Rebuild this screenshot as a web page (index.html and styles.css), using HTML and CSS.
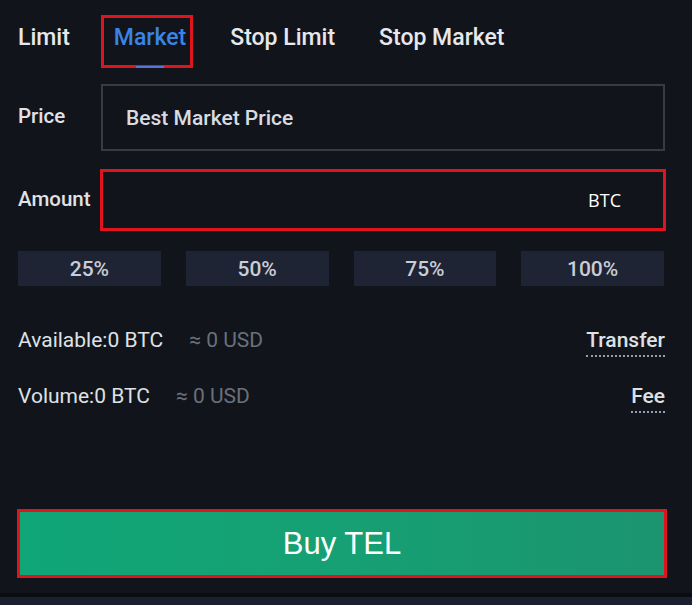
FILE: index.html
```html
<!DOCTYPE html>
<html lang="en">
<head>
<meta charset="utf-8">
<title>Buy TEL</title>
<link rel="stylesheet" href="styles.css">
</head>
<body>
<div class="panel">
  <nav class="tabs">
    <span class="tab">Limit</span>
    <span class="tab tab-active">Market</span>
    <span class="tab">Stop Limit</span>
    <span class="tab">Stop Market</span>
  </nav>

  <div class="field-row">
    <label class="field-label">Price</label>
    <div class="field field-price">Best Market Price</div>
  </div>

  <div class="field-row field-row-amount">
    <label class="field-label">Amount</label>
    <div class="field field-amount"><span class="unit">BTC</span></div>
  </div>

  <div class="pcts">
    <button class="pct">25%</button>
    <button class="pct">50%</button>
    <button class="pct">75%</button>
    <button class="pct">100%</button>
  </div>

  <div class="info">
    <div class="info-row">
      <span class="info-main">Available:0 BTC</span>
      <span class="info-usd">≈ 0 USD</span>
      <span class="info-link">Transfer</span>
    </div>
    <div class="info-row">
      <span class="info-main">Volume:0 BTC</span>
      <span class="info-usd">≈ 0 USD</span>
      <span class="info-link">Fee</span>
    </div>
  </div>

  <button class="buy">Buy TEL</button>
</div>
<div class="band"></div>
</body>
</html>
```
FILE: styles.css
```css
* { box-sizing: border-box; }

html, body {
  margin: 0;
  background: #11151b;
}

body {
  width: 692px;
  height: 605px;
  overflow: hidden;
  font-family: Roboto, "Noto Sans", sans-serif;
  color: #e4e6ea;
}

.panel {
  padding: 23px 26px 0 18px;
  height: 593px;
  display: flex;
  flex-direction: column;
}

.tabs {
  display: flex;
  gap: 44px;
  font-size: 23px;
  font-weight: 500;
  line-height: 30px;
  height: 30px;
}

.tab {
  position: relative;
  color: #e6e8ec;
}

.tab-active {
  color: #3a84e6;
}

.tab-active::after {
  content: "";
  position: absolute;
  left: -13px;
  right: -7px;
  top: -8px;
  bottom: -15px;
  border: 3px solid #e0141c;
}

.tab-active::before {
  content: "";
  position: absolute;
  left: 22px;
  width: 28px;
  bottom: -15px;
  height: 2px;
  background: #5a72d8;
  z-index: 1;
}

.field-row {
  display: flex;
  align-items: center;
  margin-top: 31px;
}

.field-row-amount {
  margin-top: 18px;
}

.field-label {
  width: 82px;
  font-size: 20.5px;
  font-weight: 500;
  color: #e0e2e6;
  margin-top: -3px;
}

.field {
  flex: 1;
  display: flex;
  align-items: center;
}

.field-price {
  height: 67px;
  margin: 0 1px;
  border: 2px solid #363b44;
  padding-left: 23px;
  font-size: 21px;
  font-weight: 500;
  color: #d8dbe0;
}

.field-amount {
  height: 62px;
  border: 3px solid #e0141c;
  justify-content: flex-end;
  padding-right: 42px;
}

.unit {
  font-family: "Open Sans", sans-serif;
  font-size: 18px;
  color: #ffffff;
}

.pcts {
  margin-top: 20px;
  margin-right: 2px;
  display: grid;
  grid-template-columns: repeat(4, 1fr);
  gap: 25px;
}

.pct {
  height: 35px;
  border: 0;
  padding: 0;
  background: #1e2434;
  color: #c9cdd6;
  font-family: Roboto, sans-serif;
  font-size: 21px;
  font-weight: 500;
}

.info {
  margin-top: 42px;
  display: flex;
  flex-direction: column;
  gap: 27px;
}

.info-row {
  display: flex;
  align-items: flex-start;
  height: 29px;
  font-size: 21px;
  line-height: 24px;
}

.info-main {
  color: #dfe1e5;
}

.info-usd {
  margin-left: 26px;
  color: #6a707b;
}

.info-link {
  margin-left: auto;
  margin-right: 1px;
  padding-bottom: 3px;
  border-bottom: 2px dotted #9aa0ab;
  color: #dfe1e5;
  font-weight: 500;
}

.buy {
  margin: 96px -1px 0 -1px;
  height: 69px;
  border: 3px solid #e0141c;
  background: linear-gradient(90deg, #10a677 0%, #16a073 50%, #1b946f 100%);
  color: #ffffff;
  font-family: "Liberation Sans", Arial, sans-serif;
  font-size: 31px;
  padding: 0;
}

.band {
  height: 12px;
  background: #1b2030;
  border-top: 4px solid #0a0c10;
}
```
